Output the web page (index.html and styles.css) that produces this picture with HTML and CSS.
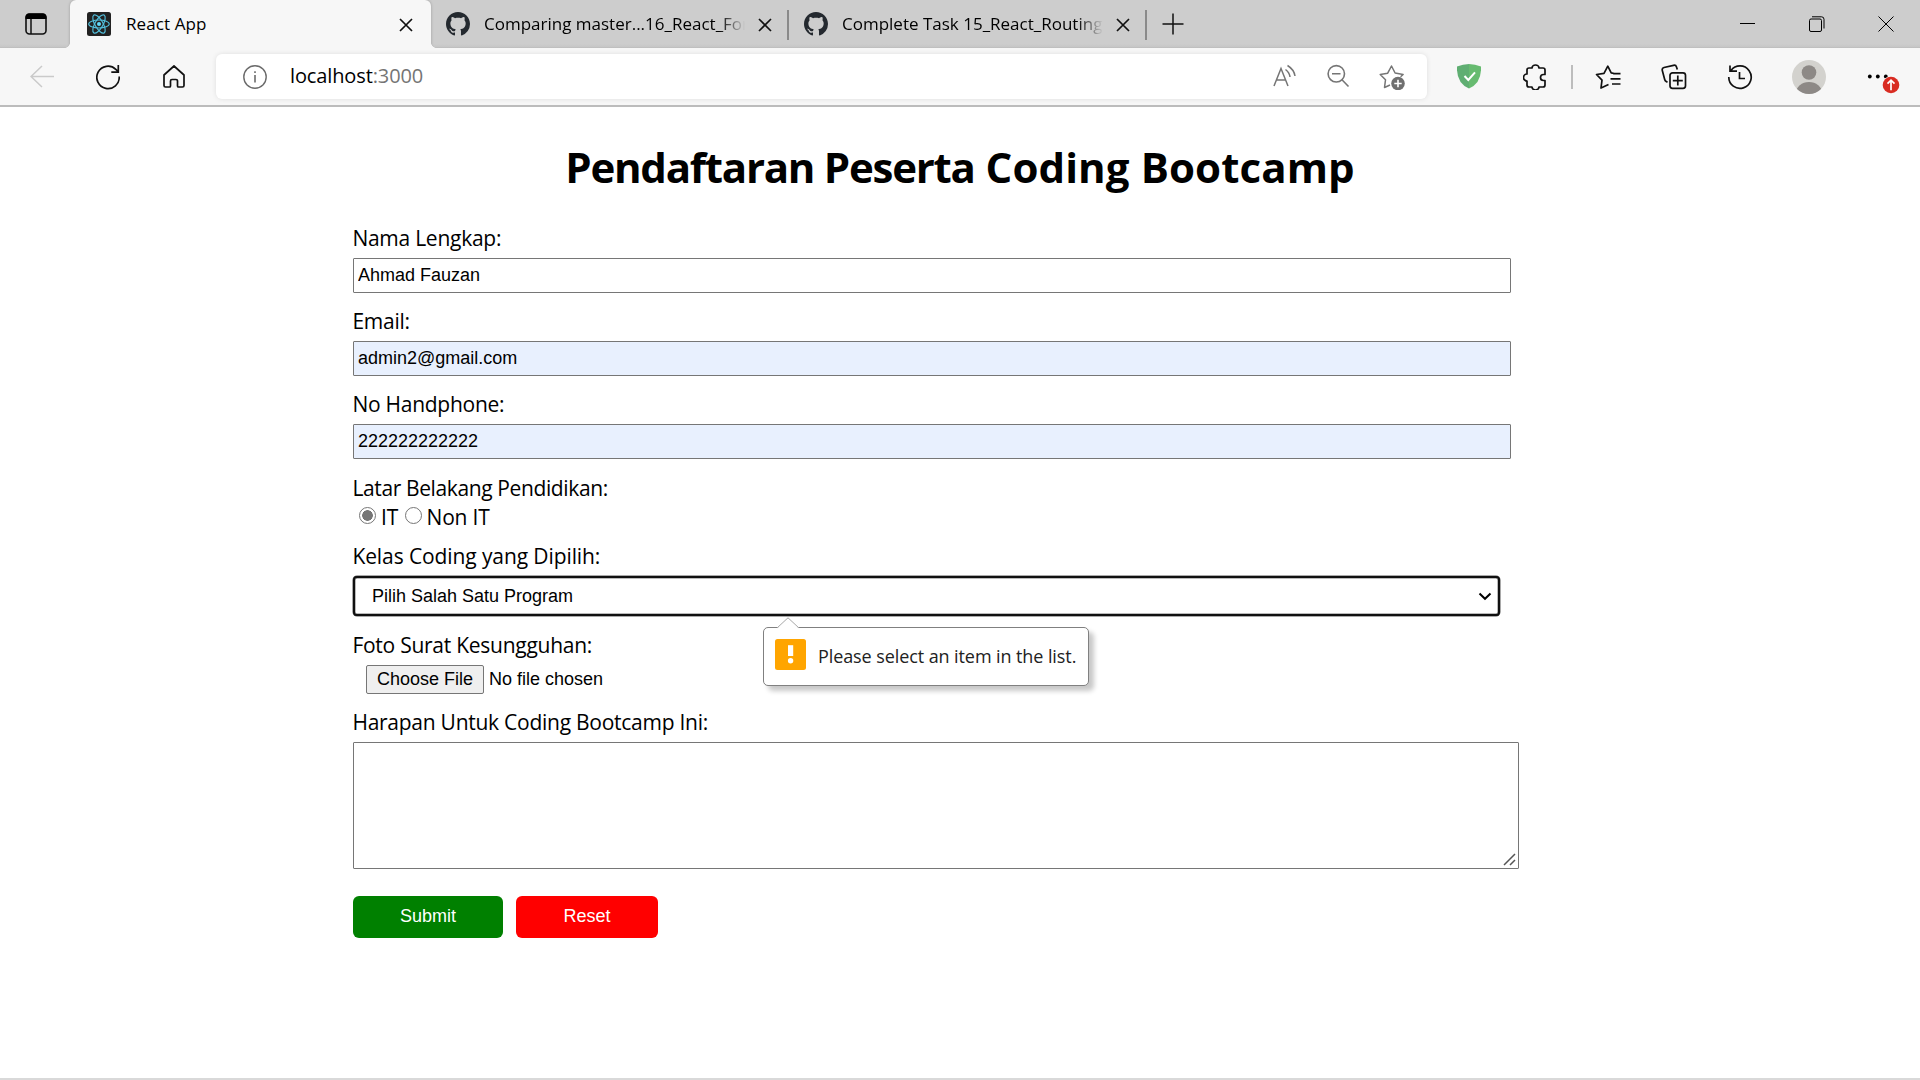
FILE: index.html
```html
<!DOCTYPE html>
<html lang="id">
<head>
<meta charset="utf-8">
<title>React App</title>
<link rel="stylesheet" href="styles.css">
</head>
<body>
<svg class="defs" width="0" height="0" aria-hidden="true">
  <symbol id="github" viewBox="0 0 16 16"><path fill="#24292f" d="M8 0C3.58 0 0 3.58 0 8c0 3.54 2.29 6.53 5.47 7.59.4.07.55-.17.55-.38 0-.19-.01-.82-.01-1.49-2.01.37-2.53-.49-2.69-.94-.09-.23-.48-.94-.82-1.13-.28-.15-.68-.52-.01-.53.63-.01 1.08.58 1.23.82.72 1.21 1.87.87 2.33.66.07-.52.28-.87.51-1.07-1.78-.2-3.64-.89-3.64-3.95 0-.87.31-1.59.82-2.15-.08-.2-.36-1.02.08-2.12 0 0 .67-.21 2.2.82.64-.18 1.32-.27 2-.27s1.36.09 2 .27c1.53-1.04 2.2-.82 2.2-.82.44 1.1.16 1.92.08 2.12.51.56.82 1.27.82 2.15 0 3.07-1.87 3.75-3.65 3.95.29.25.54.73.54 1.48 0 1.07-.01 1.93-.01 2.2 0 .21.15.46.55.38A8.01 8.01 0 0 0 16 8c0-4.42-3.58-8-8-8z"/></symbol>
  <symbol id="close" viewBox="0 0 14 14"><path d="M1 1l12 12M13 1L1 13" fill="none" stroke="#111" stroke-width="1.7"/></symbol>
</svg>

<header class="browser">
  <div class="tabstrip">
    <div class="workspaces">
      <svg width="22" height="22" viewBox="0 0 22 22"><rect x="1" y="1" width="20" height="20" rx="3.5" fill="none" stroke="#111" stroke-width="1.6"/><path d="M.5 6V4A3.5 3.5 0 0 1 4 .5h14A3.500 3.500 0 0 1 21.500 4v2z"/><path d="M6 6v15" stroke="#111" stroke-width="1.500"/></svg>
    </div>
    <div class="tab tab-active">
      <svg class="favicon" viewBox="0 0 24 24"><rect width="24" height="24" rx="2.500" fill="#222"/><g fill="none" stroke="#53c1de" stroke-width="1.150"><ellipse cx="12" cy="12" rx="10.300" ry="4"/><ellipse cx="12" cy="12" rx="10.300" ry="4" transform="rotate(60 12 12)"/><ellipse cx="12" cy="12" rx="10.300" ry="4" transform="rotate(120 12 12)"/></g><circle cx="12" cy="12" r="2" fill="#61dafb"/></svg>
      <span class="tab-title">React App</span>
      <svg class="tab-close"><use href="#close"/></svg>
    </div>
    <div class="tab">
      <svg class="favicon"><use href="#github"/></svg>
      <span class="tab-title tab-title-fade">Comparing master...16_React_Form</span>
      <svg class="tab-close"><use href="#close"/></svg>
    </div>
    <div class="tab">
      <svg class="favicon"><use href="#github"/></svg>
      <span class="tab-title tab-title-fade">Complete Task 15_React_Routing</span>
      <svg class="tab-close"><use href="#close"/></svg>
    </div>
    <svg class="new-tab" width="22" height="22" viewBox="0 0 22 22"><path d="M11 .5v21M.5 11h21" stroke="#111" stroke-width="1.500"/></svg>
    <div class="window-controls">
      <svg width="16" height="16"><path d="M0 7.500h15" stroke="#000"/></svg>
      <svg width="16" height="16" fill="none" stroke="#000"><rect x=".5" y="3" width="12" height="12.500" rx="1.500"/><path d="M3 .8h9.500A2.500 2.500 0 0 1 15 3.300v9.200"/></svg>
      <svg width="16" height="16"><path d="M.5 .5l15 15M15.500 .5l-15 15" stroke="#000"/></svg>
    </div>
  </div>

  <div class="toolbar">
    <div class="tool"><svg width="24" height="24" fill="none" stroke="#cacaca" stroke-width="1.500"><path d="M24 11.500H1M12 1L1 11.500 12 22"/></svg></div>
    <div class="tool"><svg width="24" height="26" fill="none" stroke="#111" stroke-width="1.700"><path d="M23.200 12.500A11.200 11.200 0 1 1 19.800 5.300L22 7.500M22.300 1v7.200h-7"/></svg></div>
    <div class="tool"><svg width="24" height="26" fill="none" stroke="#111" stroke-width="1.700" stroke-linejoin="round"><path d="M2 11L12 2l10 9v10.500a1.500 1.500 0 0 1-1.500 1.500H16.500a1 1 0 0 1-1-1v-5a1.500 1.500 0 0 0-1.500-1.500h-4A1.500 1.500 0 0 0 8.500 17v5a1 1 0 0 1-1 1h-4A1.500 1.500 0 0 1 2 21.500z"/></svg></div>
    <div class="address">
      <svg class="info" width="24" height="24" fill="none" stroke="#6b6b6b" stroke-width="1.400"><circle cx="12" cy="12" r="11.200"/><path d="M12 10v7.500M12 6.200v1.800" stroke-width="1.600"/></svg>
      <span class="url">localhost<span class="port">:3000</span></span>
      <div class="address-tools">
        <div class="mini"><svg width="24" height="24" fill="none" stroke="#757575" stroke-width="1.500"><path d="M2 22L9 4.500 16 22M4.500 16h9M13.500 5.500q4 3 4.500 7.500M15.500 1.500q6.500 4 7.500 10.500"/></svg></div>
        <div class="mini"><svg width="24" height="24" fill="none" stroke="#757575" stroke-width="1.600"><circle cx="10.300" cy="9.800" r="8.200"/><path d="M6 9.800h8.500M16.200 16L22.500 22.500"/></svg></div>
        <div class="mini"><svg width="26" height="28" viewBox="0 0 26 28" fill="none" stroke="#757575" stroke-width="1.500" stroke-linejoin="round"><path d="M11 23l-5.500 2.500 1-7.700L1.200 12.500l7.500-1.300L12.500 4l3.600 7 8 1.500-2.500 2.300"/><circle cx="19" cy="21.500" r="6.800" fill="#6f6f6f" stroke="none"/><path d="M19 17.800v7.400M15.300 21.500h7.400" stroke="#fff" stroke-width="1.600"/></svg></div>
      </div>
    </div>
    <div class="tool tool-first"><svg width="24" height="25"><path d="M12 0Q6 .2 0 2.500Q-.8 19 12 24.500Z" fill="#5fae72"/><path d="M12 0q6 .2 12 2.500Q24.800 19 12 24.500Z" fill="#67bb70"/><path d="M7.500 12l3.800 4L18 8.300" fill="none" stroke="#fff" stroke-width="2"/></svg></div>
    <div class="tool"><svg width="24" height="26" fill="none" stroke="#111" stroke-width="1.700" stroke-linejoin="round"><path d="M9 4a3.500 3 0 0 1 7 0h4a2 2 0 0 1 2 2v4.500h-1.500a3 3 0 0 0 0 6H22V21a2 2 0 0 1-2 2h-4a3.500 3 0 0 1-7 0H6a2 2 0 0 1-2-2v-4a3.500 3.500 0 0 1 0-7V6a2 2 0 0 1 2-2z"/></svg></div>
    <div class="tool-separator"></div>
    <div class="tool"><svg width="26" height="26" fill="none" stroke="#111" stroke-width="1.700" stroke-linejoin="round"><path d="M13.500 20.500L6 24l1-7.800L1.500 10.500l7.500-1.200 3.800-7.100 3.400 6.600 3 .7M18 9.600h7.500M15.500 14.800h10M17 20h8.500"/></svg></div>
    <div class="tool"><svg width="26" height="26" fill="none" stroke="#111" stroke-width="1.700" stroke-linejoin="round"><path d="M6.500 18.200l-1.300-.7a3 3 0 0 1-1.500-2L1.300 6.500A2.500 2.500 0 0 1 3 3.500l9.500-2.200a2.500 2.500 0 0 1 3 1.700l.8 2.500"/><rect x="9" y="8.800" width="15.500" height="15.500" rx="2.500"/><path d="M16.800 11.600v10M11.800 16.600h10"/></svg></div>
    <div class="tool"><svg width="26" height="26" fill="none" stroke="#111" stroke-width="1.700"><path d="M1.800 13A11.200 11.200 0 1 0 4 6.500M3 1.500v5.700h7M12.500 8v6.500h5.500"/></svg></div>
    <svg class="avatar" width="34" height="34" viewBox="0 0 34 34"><clipPath id="face"><circle cx="17" cy="17" r="17"/></clipPath><g clip-path="url(#face)"><rect width="34" height="34" fill="#d3d2ce"/><circle cx="17" cy="12.500" r="7.300" fill="#8d8986"/><ellipse cx="17" cy="33" rx="13" ry="11" fill="#8d8986"/></g></svg>
    <svg class="menu" width="36" height="34"><circle cx="3.800" cy="16.500" r="1.900"/><circle cx="11.800" cy="16.500" r="1.900"/><circle cx="19.800" cy="16.500" r="1.900"/><circle cx="25" cy="25" r="9" fill="#f7f7f7"/><circle cx="25" cy="25" r="8.300" fill="#d92c22"/><path d="M25 30.300v-10M21.500 23.600L25 20.100l3.500 3.500" fill="none" stroke="#fff" stroke-width="1.700"/></svg>
  </div>
</header>

<main class="page">
  <h1 class="title"><span class="title-lead">Pendaftaran Peserta</span> <span class="title-rest">Coding Bootcamp</span></h1>
  <form class="form">
    <div class="field">
      <label class="label" for="nama">Nama Lengkap:</label>
      <input class="input" id="nama" type="text" value="Ahmad Fauzan">
    </div>
    <div class="field">
      <label class="label" for="email">Email:</label>
      <input class="input input-autofill" id="email" type="text" value="admin2@gmail.com">
    </div>
    <div class="field">
      <label class="label" for="hp">No Handphone:</label>
      <input class="input input-autofill" id="hp" type="text" value="222222222222">
    </div>
    <div class="field field-radio">
      <span class="label label-tight">Latar Belakang Pendidikan:</span>
      <div class="radios">
        <span class="radio radio-checked"></span><span class="radio-label">IT</span>
        <span class="radio"></span><span class="radio-label">Non IT</span>
      </div>
    </div>
    <div class="field field-select">
      <label class="label label-wide" for="kelas">Kelas Coding yang Dipilih:</label>
      <div class="select-box">
        <select class="select" id="kelas"><option>Pilih Salah Satu Program</option></select>
        <svg class="chevron" width="14" height="9"><path d="M1.500 1.500L7 6.800l5.500-5.300" fill="none" stroke="#000" stroke-width="2"/></svg>
        <div class="bubble">
          <svg class="bubble-arrow" width="24" height="12"><path d="M1 11.500L12 .8l11 10.700V12H1z" fill="#fff"/><path d="M1 11L12 .8 23 11" fill="none" stroke="#a8a8a8"/></svg>
          <svg class="bubble-icon" width="31" height="31"><rect width="31" height="31" rx="2.500" fill="#ffa500"/><rect x="13" y="6.200" width="5.200" height="10.800" fill="#fff"/><circle cx="15.600" cy="21.700" r="2.700" fill="#fff"/></svg>
          <span class="bubble-text">Please select an item in the list.</span>
        </div>
      </div>
    </div>
    <div class="field field-file">
      <label class="label" for="foto">Foto Surat Kesungguhan:</label>
      <input class="file" id="foto" type="file">
    </div>
    <div class="field">
      <label class="label" for="harapan">Harapan Untuk Coding Bootcamp Ini:</label>
      <div class="textarea-box">
        <textarea class="textarea" id="harapan"></textarea>
        <svg class="grip" width="13" height="13"><path d="M1 12L12 1M7 12l5-5" stroke="#555" stroke-width="1.500"/></svg>
      </div>
    </div>
    <div class="actions">
      <button class="button submit" type="button">Submit</button>
      <button class="button reset" type="button">Reset</button>
    </div>
  </form>
</main>
</body>
</html>
```
FILE: styles.css
```css
* { box-sizing: border-box; }

body {
  margin: 0;
  height: 1080px;
  display: flex;
  flex-direction: column;
  overflow: hidden;
  background: #fff;
  color: #000;
  font-family: "Open Sans", "Noto Sans", sans-serif;
  border-bottom: 2px solid #d9d9d9;
}

svg { display: block; flex: none; }
.defs { position: absolute; }

/* Tab strip */
.tabstrip {
  display: flex;
  align-items: center;
  height: 48px;
  background: linear-gradient(#cdcdcd 44px, #c6c6c6 47px, #b9b9b9 48px);
}
.workspaces { width: 70px; padding-left: 25px; }
.tab {
  display: flex;
  align-items: center;
  position: relative;
  width: 358px;
  height: 48px;
  padding: 0 17px 0 15px;
}
.tab:not(.tab-active)::after {
  content: "";
  position: absolute;
  right: 0;
  top: 10px;
  width: 2px;
  height: 30px;
  background: #8a8a8a;
}
.tab-active {
  width: 361px;
  padding: 0 18px 0 17px;
  background: #f7f7f7;
  border-radius: 6px 6px 0 0;
  box-shadow: 0 0 3px rgba(0, 0, 0, .25);
  clip-path: inset(0 -6px 0 -6px);
  letter-spacing: .1px;
}
.tab-active::before,
.tab-active::after {
  content: "";
  position: absolute;
  bottom: 0;
  width: 5px;
  height: 5px;
}
.tab-active::before { left: -5px; background: radial-gradient(circle at 0 0, transparent 4.5px, #f7f7f7 5px); }
.tab-active::after { right: -5px; background: radial-gradient(circle at 100% 0, transparent 4.5px, #f7f7f7 5px); }
.favicon { width: 24px; height: 24px; }
.tab-title {
  flex: 1;
  margin: 0 13px 0 14px;
  overflow: hidden;
  white-space: nowrap;
  font-size: 17px;
  line-height: 24px;
}
.tab-active .tab-title { margin-left: 15px; }
.tab-title-fade {
  -webkit-mask-image: linear-gradient(90deg, #000 calc(100% - 26px), transparent);
  mask-image: linear-gradient(90deg, #000 calc(100% - 26px), transparent);
}
.tab-close { width: 14px; height: 14px; margin-top: 2px; }
.new-tab { margin: -1px 0 0 15px; }
.window-controls { display: flex; gap: 53px; margin: 0 26px 0 auto; }

/* Toolbar */
.toolbar {
  display: flex;
  align-items: center;
  height: 59px;
  padding-left: 9px;
  background: #f7f7f7;
  border-bottom: 2px solid #bcbcbc;
}
.tool { display: flex; justify-content: center; width: 66px; }
.tool-first { margin-left: 9px; }
.address {
  display: flex;
  align-items: center;
  width: 1211px;
  height: 45px;
  margin-left: 9px;
  padding: 0 8px 0 27px;
  background: #fff;
  border-radius: 6px;
  box-shadow: 0 0 5px rgba(0, 0, 0, .1);
}
.url { margin: -1px 0 0 23px; font-size: 20px; line-height: 28px; letter-spacing: -.12px; }
.port { color: #757575; }
.address-tools { display: flex; align-items: center; margin: -1px 0 0 auto; }
.mini { display: flex; justify-content: center; width: 54px; }
.tool-separator { width: 2px; height: 24px; margin: 0 2px 0 3px; background: #bdbdbd; }
.avatar { margin-left: 19px; }
.menu { margin-left: 40px; }

/* Page */
.page { width: 1214px; margin: 30px auto 0; }
.title {
  margin: 0 0 26px;
  text-align: center;
  font-size: 42px;
  line-height: 60px;
  font-weight: 700;
  white-space: nowrap;
}
.title-lead { letter-spacing: -1.25px; }
.title-rest { letter-spacing: .1px; }
.field { display: flex; flex-direction: column; align-items: flex-start; margin-bottom: 13px; }
.label {
  margin: 0 0 5px -.6px;
  font-size: 21px;
  line-height: 30px;
  letter-spacing: -.26px;
}
.label-tight { margin-bottom: -1px; letter-spacing: -.38px; }
.label-wide { letter-spacing: -.1px; }
.input, .select, .file, .textarea, .button {
  margin: 0;
  font-family: "Liberation Sans", Arial, sans-serif;
  font-size: 18px;
  color: #000;
}
.input {
  width: 1158px;
  height: 35px;
  padding: 0 4px;
  border: 1px solid #767676;
  border-radius: 1px;
  background: #fff;
}
.input-autofill { background: #e8f0fe; }

.field-radio { margin: 14px 0 9px; }
.radios { display: flex; align-items: center; height: 30px; padding-left: 6px; }
.radio {
  width: 17px;
  height: 17px;
  margin: -3px 5px 0 0;
  border: 1px solid #767676;
  border-radius: 50%;
}
.radio-checked { background: radial-gradient(circle, #767676 5px, #fff 5.6px); }
.radio-label { margin-right: 6.5px; font-size: 21px; line-height: 30px; letter-spacing: -.2px; }

.field-select { margin-bottom: 14px; }
.select-box { position: relative; width: 1147px; }
.select {
  display: block;
  width: 100%;
  height: 40px;
  padding: 0 17px;
  appearance: none;
  border: 2px solid #101010;
  border-radius: 4px;
  background: #fff;
  box-shadow: 0 0 0 .5px #555, inset 0 0 0 .5px #777;
}
.chevron { position: absolute; right: 8px; top: 16px; }

/* Validation message floating below the select */
.bubble {
  position: absolute;
  z-index: 1;
  left: 410px;
  top: 51px;
  display: flex;
  align-items: flex-start;
  width: 326px;
  height: 59px;
  padding: 11px;
  border: 1px solid #808080;
  border-radius: 5px;
  background: #fff;
  box-shadow: 5px 5px 5px rgba(0, 0, 0, .22);
}
.bubble-arrow { position: absolute; left: 12px; top: -11px; }
.bubble-text {
  margin: 5px 0 0 12px;
  font-size: 18px;
  line-height: 24px;
  letter-spacing: -.09px;
  color: #222;
  white-space: nowrap;
}

.file { width: 330px; height: 29px; margin-left: 13px; }
.file::file-selector-button {
  height: 29px;
  margin: 0 5px 0 0;
  padding: 0 10px;
  border: 1px solid #767676;
  border-radius: 2px;
  background: #efefef;
  color: #000;
  font: inherit;
}

.textarea-box { position: relative; width: 1166px; }
.textarea {
  display: block;
  width: 100%;
  height: 127px;
  border: 1px solid #767676;
  border-radius: 1px;
  background: #fff;
  resize: none;
}
.grip { position: absolute; right: 3px; bottom: 3px; }

.actions { display: flex; gap: 13px; padding-top: 14px; }
.button {
  height: 42px;
  padding: 0 0 2px;
  border: 0;
  border-radius: 6px;
  color: #fff;
}
.submit { width: 150px; background: #008000; }
.reset { width: 142px; background: #f00; }
```
